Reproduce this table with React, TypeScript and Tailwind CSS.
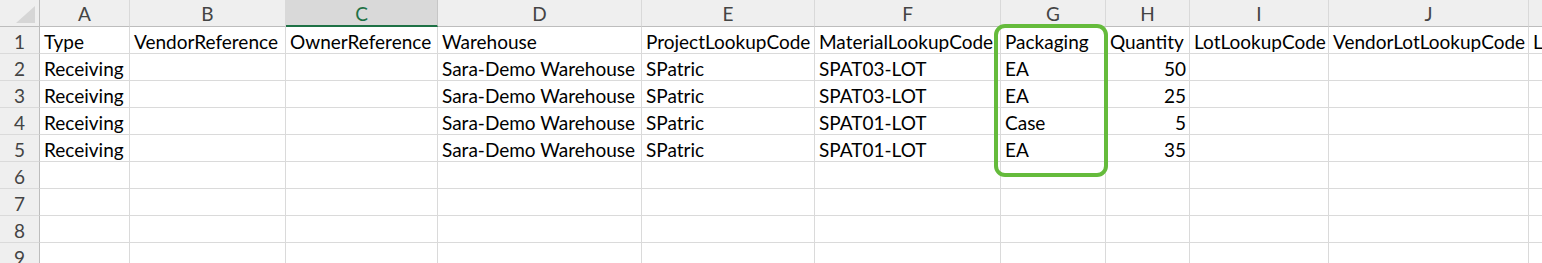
const cols = [
  { key: "A", w: 90 },
  { key: "B", w: 156 },
  { key: "C", w: 152 },
  { key: "D", w: 204 },
  { key: "E", w: 173 },
  { key: "F", w: 186 },
  { key: "G", w: 105 },
  { key: "H", w: 84 },
  { key: "I", w: 139 },
  { key: "J", w: 200 },
  { key: "K", w: 40 },
];

const rows: string[][] = [
  ["Type", "VendorReference", "OwnerReference", "Warehouse", "ProjectLookupCode", "MaterialLookupCode", "Packaging", "Quantity", "LotLookupCode", "VendorLotLookupCode", "L"],
  ["Receiving", "", "", "Sara-Demo Warehouse", "SPatric", "SPAT03-LOT", "EA", "50", "", "", ""],
  ["Receiving", "", "", "Sara-Demo Warehouse", "SPatric", "SPAT03-LOT", "EA", "25", "", "", ""],
  ["Receiving", "", "", "Sara-Demo Warehouse", "SPatric", "SPAT01-LOT", "Case", "5", "", "", ""],
  ["Receiving", "", "", "Sara-Demo Warehouse", "SPatric", "SPAT01-LOT", "EA", "35", "", "", ""],
  [], [], [], [],
];

const template = "40px " + cols.map((c) => c.w + "px").join(" ") + " 1fr";

export default function App() {
  return (
    <div className="relative w-[1542px] h-[263px] overflow-hidden bg-white font-['Lato',sans-serif] text-[19px] leading-none text-black">
      <div className="grid" style={{ gridTemplateColumns: template }}>
        {/* corner */}
        <div className="relative h-[27px] bg-[#efefef] border-r border-b border-[#bdbdbd]">
          <div className="absolute right-[4px] bottom-[3px] w-0 h-0 border-l-[19px] border-l-transparent border-b-[17px] border-b-[#d6d6d6]" />
        </div>
        {cols.map((c) => (
          <div
            key={c.key}
            className={
              c.key === "C"
                ? "h-[27px] flex items-center justify-center bg-[#d9d9d9] border-r border-[#c6c6c6] border-b-2 border-b-[#1e7145] text-[#1e7145] pt-[1px]"
                : "h-[27px] flex items-center justify-center bg-[#efefef] border-r border-[#d9d9d9] border-b border-b-[#bdbdbd] text-[#444]"
            }
          >
            {c.key}
          </div>
        ))}
        <div className="h-[27px] bg-[#efefef] border-b border-[#bdbdbd]" />

        {rows.map((r, i) => (
          <Row key={i} n={i + 1} cells={r} />
        ))}
      </div>

      {/* highlight around Packaging column */}
      <div className="absolute left-[994px] top-[24px] w-[114px] h-[153px] rounded-[11px] border-4 border-[#65bb3c]" />
    </div>
  );
}

function Row({ n, cells }: { n: number; cells: string[] }) {
  return (
    <>
      <div className="h-[27px] flex items-center justify-center bg-[#efefef] border-r border-r-[#bdbdbd] border-b border-b-[#dadada] text-[#444] pt-[2px]">
        {n}
      </div>
      {cols.map((c, j) => {
        const v = cells[j] ?? "";
        const num = c.key === "H" && n > 1;
        return (
          <div
            key={c.key}
            className={
              "h-[27px] flex items-center overflow-hidden whitespace-nowrap border-r border-b border-[#dadada] pt-[3px] " +
              (num ? "justify-end pr-[3px]" : "pl-[4px]")
            }
          >
            {v}
          </div>
        );
      })}
      <div className="h-[27px] border-b border-[#dadada]" />
    </>
  );
}
